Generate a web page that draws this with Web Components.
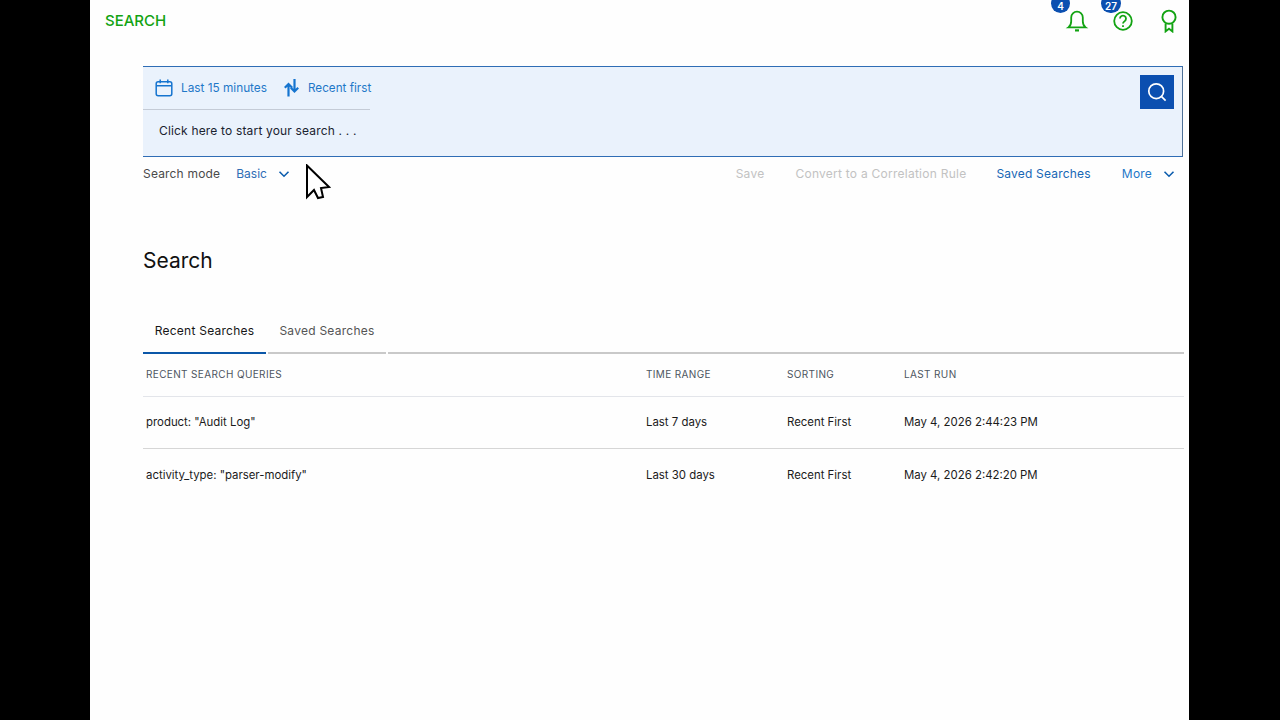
<!DOCTYPE html>
<html>
<head>
<meta charset="utf-8">
<title>Search</title>
<style>
html, body { margin: 0; height: 100%; background: #000; overflow: hidden; }
body { font-family: Inter, "Liberation Sans", sans-serif; }
</style>
</head>
<body>
<search-page></search-page>

<script>
const chevron = `<svg width="12" height="12" viewBox="0 0 12 12" fill="none" stroke="#0b5cad" stroke-width="1.6"><path d="M1.5 3.8 6 8.2l4.5-4.4"/></svg>`;

class TopBar extends HTMLElement {
    constructor() {
        super();
        this.shadow = this.attachShadow({ mode: 'open' });
    }
    connectedCallback() {
        this.shadow.innerHTML = `
        <style>
        :host { display: flex; align-items: flex-start; justify-content: space-between; height: 66px; padding-left: 15px; padding-right: 8px; }
        .title { margin-top: 12px; font-size: 15px; line-height: 17px; font-weight: 500; color: #12a312; }
        .icons { display: flex; gap: 22px; margin-top: 9px; }
        .icon { position: relative; width: 24px; height: 24px; }
        .badge { position: absolute; top: -15px; right: 19px; box-sizing: border-box; min-width: 19px; height: 19px; padding-top: 6px; border-radius: 10px; background: #0b4fb0; color: #fff; font-size: 10px; font-weight: 600; line-height: 12px; text-align: center; }
        .wide { right: 14px; min-width: 20px; }
        svg { display: block; }
        </style>
        <div class="title">SEARCH</div>
        <div class="icons">
            <div class="icon">
                <span class="badge">4</span>
                <svg width="24" height="24" viewBox="0 0 24 24" fill="none" stroke="#12a312" stroke-width="1.8"><path d="M3.4 18.4c1.9-1.4 2.800-3.400 2.800-6.200V8.400a5.800 5.800 0 0 1 11.600 0v3.800c0 2.800.9 4.800 2.800 6.200z"/><path d="M10 21.400h4" stroke-width="2.200"/></svg>
            </div>
            <div class="icon">
                <span class="badge wide">27</span>
                <svg width="24" height="24" viewBox="0 0 24 24" fill="none" stroke="#12a312" stroke-width="1.8"><circle cx="12" cy="12" r="8.800"/><path d="M9 9.600a3 3 0 1 1 4.600 2.600c-1 .6-1.600 1.200-1.600 2.400"/><path d="M12 16.200v1.800" stroke-width="1.800"/></svg>
            </div>
            <div class="icon">
                <svg width="24" height="24" viewBox="0 0 24 24" fill="none" stroke="#12a312" stroke-width="1.9"><circle cx="12" cy="8.200" r="6.600"/><path d="M8.600 14.400v8l3.400-2.600 3.400 2.600v-8"/></svg>
            </div>
        </div>
        `;
    }
}
customElements.define('top-bar', TopBar);

class SearchBox extends HTMLElement {
    constructor() {
        super();
        this.shadow = this.attachShadow({ mode: 'open' });
    }
    connectedCallback() {
        this.shadow.innerHTML = `
        <style>
        :host { display: flex; justify-content: space-between; height: 89px; margin-left: 53px; margin-right: 6px; background: #eaf2fc; border-top: 1px solid #2f6db5; border-bottom: 1px solid #2f6db5; border-right: 1px solid #4d6f96; font-size: 12px; }
        .left { width: 227px; }
        .filters { display: flex; align-items: center; height: 43px; box-sizing: border-box; border-bottom: 1px solid #c4cbd6; color: #1f78c8; }
        .filters svg { display: block; flex: none; }
        .filters span { white-space: nowrap; }
        .cal { margin-left: 12px; margin-right: 8px; }
        .sort { margin-left: 16px; margin-right: 7px; }
        .range { font-size: 11.8px; }
        .first { font-size: 11.7px; }
        .query { margin: 13px 0 0 16px; line-height: 16px; color: #1a2330; white-space: nowrap; letter-spacing: .17px; }
        .go { display: flex; align-items: center; justify-content: center; width: 34px; height: 34px; margin: 8px 8px 0 0; background: #0b4fb0; }
        .go svg { display: block; }
        </style>
        <div class="left">
            <div class="filters">
                <svg class="cal" width="18" height="18" viewBox="0 0 18 18" fill="none" stroke="#1574cf" stroke-width="1.5"><rect x="1.200" y="2.800" width="15.600" height="14" rx="2"/><path d="M1.200 6.800h15.600M5.200.6v3.600M12.800.6v3.600"/></svg>
                <span class="range">Last 15 minutes</span>
                <svg class="sort" width="18" height="18" viewBox="0 0 18 18" fill="none" stroke="#1574cf" stroke-width="2.200"><path d="M11.500 0v12.500M7.800 8.800l3.700 3.700 3.700-3.700"/><path d="M5.500 17.500V5M1.800 8.700 5.500 5l3.700 3.700"/></svg>
                <span class="first">Recent first</span>
            </div>
            <div class="query">Click here to start your search . . .</div>
        </div>
        <div class="go">
            <svg width="20" height="20" viewBox="0 0 20 20" fill="none" stroke="#fff" stroke-width="1.7"><circle cx="9.200" cy="9.200" r="7.400"/><path d="m14.600 14.600 4 4"/></svg>
        </div>
        `;
    }
}
customElements.define('search-box', SearchBox);

class ActionBar extends HTMLElement {
    constructor() {
        super();
        this.shadow = this.attachShadow({ mode: 'open' });
    }
    connectedCallback() {
        this.shadow.innerHTML = `
        <style>
        :host { display: flex; align-items: center; height: 33px; margin-left: 53px; margin-right: 14px; font-size: 12px; white-space: nowrap; }
        .label { color: #4a4a4a; margin-right: 16px; letter-spacing: .18px; }
        .link { color: #1f78c8; letter-spacing: .2px; }
        .off { color: #c2c2c2; letter-spacing: .25px; }
        svg { display: block; }
        .basic { margin-right: 11px; color: #2f6db5; }
        .spacer { flex: 1; }
        .save { margin-right: 31px; }
        .rule { margin-right: 30px; }
        .saved { margin-right: 31px; color: #1766b5; letter-spacing: .2px; }
        .more { margin-right: 11px; }
        </style>
        <span class="label">Search mode</span>
        <span class="basic">Basic</span>
        ${chevron}
        <span class="spacer"></span>
        <span class="off save">Save</span>
        <span class="off rule">Convert to a Correlation Rule</span>
        <span class="saved">Saved Searches</span>
        <span class="link more">More</span>
        ${chevron}
        `;
    }
}
customElements.define('action-bar', ActionBar);

class TabStrip extends HTMLElement {
    constructor() {
        super();
        this.shadow = this.attachShadow({ mode: 'open' });
    }
    connectedCallback() {
        this.shadow.innerHTML = `
        <style>
        :host { display: flex; gap: 2px; height: 44px; font-size: 12px; letter-spacing: .25px; }
        .tab { display: flex; align-items: center; justify-content: center; box-sizing: border-box; padding-bottom: 2px; border-bottom: 2px solid #c9c9c9; color: #555; white-space: nowrap; }
        .on { width: 123px; border-bottom-color: #0b57a8; color: #161616; }
        .off { width: 118px; }
        .rest { flex: 1; }
        </style>
        <div class="tab on">Recent Searches</div>
        <div class="tab off">Saved Searches</div>
        <div class="tab rest"></div>
        `;
    }
}
customElements.define('tab-strip', TabStrip);

class SearchRow extends HTMLElement {
    constructor() {
        super();
        this.shadow = this.attachShadow({ mode: 'open' });
    }
    connectedCallback() {
        const head = this.hasAttribute('head');
        this.shadow.innerHTML = `
        <style>
        :host { display: grid; grid-template-columns: 500px 141px 117px 1fr; align-items: center; box-sizing: border-box; height: ${head ? 43 : 52}px; padding-left: 3px; padding-bottom: ${head ? 2 : 1}px; border-bottom: 1px solid ${head ? '#e3e5ea' : '#d6d6d6'}; font-size: ${head ? '10px' : '11.4px'}; letter-spacing: ${head ? '.36px' : '0'}; color: ${head ? '#4d5560' : '#1b1b1b'}; white-space: nowrap; }
        :host([last]) { border-bottom: 0; }
        </style>
        <slot></slot>
        `;
    }
}
customElements.define('search-row', SearchRow);

class SearchPage extends HTMLElement {
    constructor() {
        super();
        this.shadow = this.attachShadow({ mode: 'open' });
    }
    connectedCallback() {
        this.shadow.innerHTML = `
        <style>
        :host { display: block; position: relative; box-sizing: border-box; width: 1099px; height: 720px; margin-left: 90px; background: #fefefe; overflow: hidden; font-family: Inter, "Liberation Sans", sans-serif; }
        .content { margin-left: 53px; margin-right: 5px; }
        h1 { margin: 0; padding-top: 58px; height: 62px; font-size: 21px; line-height: 26px; font-weight: 400; color: #111; }
        .cursor { position: absolute; left: 215px; top: 164px; }
        </style>
        <top-bar></top-bar>
        <search-box></search-box>
        <action-bar></action-bar>
        <div class="content">
            <h1>Search</h1>
            <tab-strip></tab-strip>
            <search-row head><span>RECENT SEARCH QUERIES</span><span>TIME RANGE</span><span>SORTING</span><span>LAST RUN</span></search-row>
            <search-row><span>product: "Audit Log"</span><span>Last 7 days</span><span>Recent First</span><span>May 4, 2026 2:44:23 PM</span></search-row>
            <search-row last><span>activity_type: "parser-modify"</span><span>Last 30 days</span><span>Recent First</span><span>May 4, 2026 2:42:20 PM</span></search-row>
        </div>
        <svg class="cursor" width="26" height="37" viewBox="0 0 26 37" fill="#fff" stroke="#000" stroke-width="2"><path d="M2 1.500V33l7-7 4 8 5-1-2-9 8-1z"/></svg>
        `;
    }
}
customElements.define('search-page', SearchPage);
</script>
</body>
</html>
